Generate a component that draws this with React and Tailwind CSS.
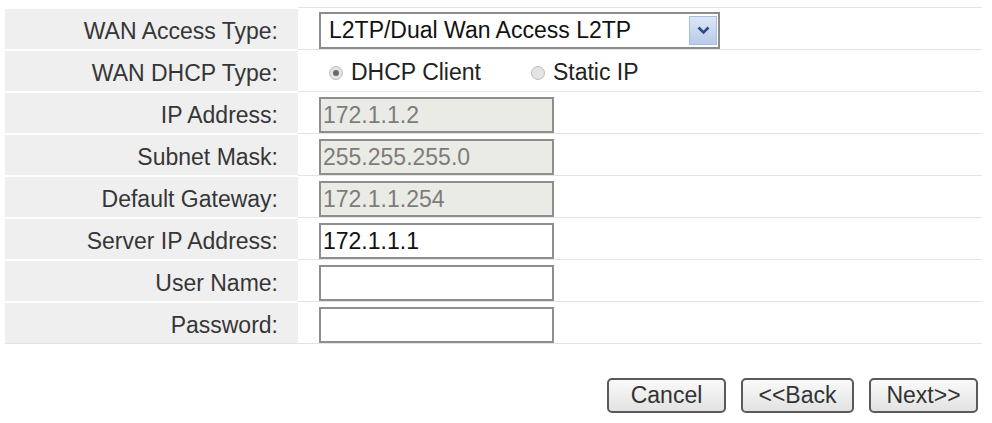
import React from 'react';

const rows = [
  { label: 'IP Address:', value: '172.1.1.2', disabled: true },
  { label: 'Subnet Mask:', value: '255.255.255.0', disabled: true },
  { label: 'Default Gateway:', value: '172.1.1.254', disabled: true },
  { label: 'Server IP Address:', value: '172.1.1.1' },
  { label: 'User Name:', value: '' },
  { label: 'Password:', value: '' },
];

function Label({ children }) {
  return (
    <div className="h-[42px] bg-[#efefef] border-t-2 border-white flex items-center justify-end pr-[20px] pt-[4px] text-[#363636]">
      {children}
    </div>
  );
}

function Cell({ children }) {
  return <div className="h-[42px] border-t border-[#e4e4e4] pl-[21px] flex items-start">{children}</div>;
}

function Radio({ checked, children }) {
  return (
    <label className="flex items-center">
      <span className="w-[14px] h-[14px] rounded-full border border-[#bdbdbd] bg-[#e4e4e4] flex items-center justify-center">
        {checked && <span className="w-[6px] h-[6px] rounded-full bg-[#6a6a6a]" />}
      </span>
      <span className="ml-[8px]">{children}</span>
    </label>
  );
}

function Btn({ w, children }) {
  return (
    <button className={`${w} h-[35px] rounded-[5px] border-2 border-[#5a5a5a] bg-gradient-to-b from-[#fafafa] to-[#e2e2e2] text-[#333] leading-none`}>
      {children}
    </button>
  );
}

export default function App() {
  return (
    <div className="w-[992px] h-[423px] bg-white overflow-hidden text-[23px]" style={{ fontFamily: '"Liberation Sans", Arial, sans-serif' }}>
      <div className="ml-[5px] pt-[7px] w-[977px]">
        <div className="grid grid-cols-[293px_1fr] border-b border-[#e4e4e4]">
          <Label>WAN Access Type:</Label>
          <Cell>
            <div className="mt-[4px] w-[401px] h-[37px] border-2 border-[#8c8c8c] bg-white flex items-center">
              <span className="flex-1 pl-[8px] text-[#111]">L2TP/Dual Wan Access L2TP</span>
              <span className="w-[28px] h-[29px] mr-[1px] bg-gradient-to-b from-[#dce7f7] to-[#b9cbe8] border border-[#a9bde0] flex items-center justify-center">
                <svg width="13" height="9" viewBox="0 0 13 9">
                  <path d="M1.5 1.5 L6.5 6.5 L11.5 1.5" fill="none" stroke="#2d4a86" strokeWidth="2.6" />
                </svg>
              </span>
            </div>
          </Cell>

          <Label>WAN DHCP Type:</Label>
          <Cell>
            <div className="h-full flex items-center gap-[50px] pl-[10px] pt-[4px] text-[#222]">
              <Radio checked>DHCP Client</Radio>
              <Radio>Static IP</Radio>
            </div>
          </Cell>

          {rows.map((r) => (
            <React.Fragment key={r.label}>
              <Label>{r.label}</Label>
              <Cell>
                <div
                  className={`mt-[5px] w-[235px] h-[36px] border-2 border-[#8e8e8e] flex items-center pl-[2px] ${
                    r.disabled ? 'bg-[#ebebe6] text-[#7c7c7c]' : 'bg-white text-[#111]'
                  }`}
                >
                  {r.value}
                </div>
              </Cell>
            </React.Fragment>
          ))}
        </div>
      </div>

      <div className="flex justify-end pr-[14px] mt-[34px] gap-[15px]">
        <Btn w="w-[119px]">Cancel</Btn>
        <Btn w="w-[113px]">&lt;&lt;Back</Btn>
        <Btn w="w-[109px]">Next&gt;&gt;</Btn>
      </div>
    </div>
  );
}
